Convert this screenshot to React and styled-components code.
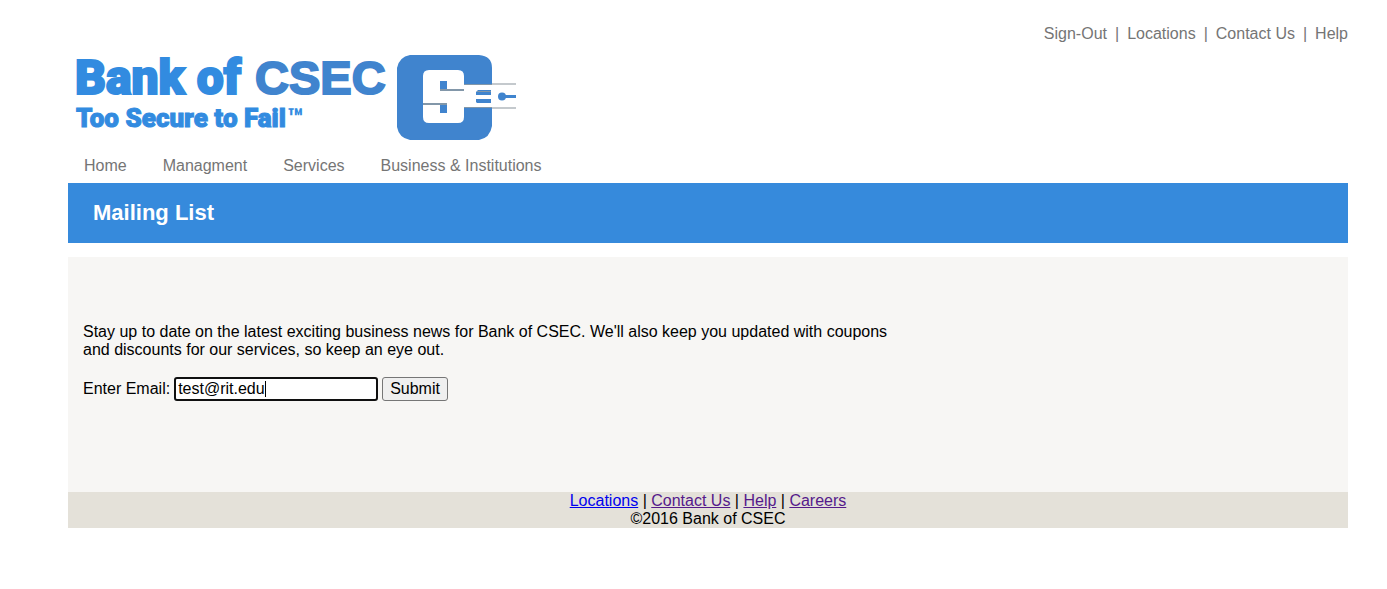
import React from "react";
import styled, { createGlobalStyle } from "styled-components";

const GlobalStyle = createGlobalStyle`
  body {
    margin: 0;
    background: #fff;
    color: #000;
    font: 16px/18px "Liberation Sans", Arial, sans-serif;
  }
`;

const Page = styled.div`
  padding: 25px 39px 0 68px;
`;

const UtilityNav = styled.nav`
  display: flex;
  justify-content: flex-end;
  gap: 8px;
  color: #757575;
`;

const PlainLink = styled.a`
  color: #757575;
  text-decoration: none;
`;

const LogoLink = styled.a`
  display: block;
  width: 450px;
  margin-top: 7px;
`;

const LogoArt = styled.svg`
  display: block;
`;

const MainNav = styled.nav`
  display: flex;
  gap: 36px;
  padding: 8px 16px;
`;

const Banner = styled.header`
  padding: 17px 25px;
  background: #368adc;
`;

const Title = styled.h1`
  margin: 0;
  color: #fff;
  font-size: 22px;
  line-height: 26px;
`;

const Panel = styled.main`
  margin-top: 14px;
  padding: 66px 15px 91px;
  background: #f7f6f4;
`;

const Intro = styled.p`
  max-width: 810px;
  margin: 0 0 18px;
`;

const SignupForm = styled.form`
  display: flex;
  align-items: center;
  gap: 4px;
`;

const EmailField = styled.div`
  position: relative;
  display: flex;
`;

const EmailInput = styled.input`
  box-sizing: border-box;
  width: 204px;
  height: 24px;
  padding: 0 2px;
  border: 2px solid #101010;
  border-radius: 3px;
  outline: none;
  background: #fff;
  color: #000;
  caret-color: transparent;
  font: inherit;
`;

const Caret = styled.span`
  position: absolute;
  top: 4px;
  left: 91px;
  width: 1px;
  height: 16px;
  background: #000;
`;

const SubmitButton = styled.button`
  box-sizing: border-box;
  height: 24px;
  padding: 0 7px;
  border: 1px solid #767676;
  border-radius: 3px;
  background: #efefef;
  color: #000;
  font: inherit;
`;

const Footer = styled.footer`
  background: #e4e1d9;
  text-align: center;
`;

const FooterLink = styled.a`
  color: ${({ $visited }) => ($visited ? "#551a8b" : "#0000ee")};
`;

const utilityLinks = ["Sign-Out", "Locations", "Contact Us", "Help"];
const sections = ["Home", "Managment", "Services", "Business & Institutions"];
const footerLinks = [
  { label: "Locations", visited: false },
  { label: "Contact Us", visited: true },
  { label: "Help", visited: true },
  { label: "Careers", visited: true },
];

function Logo() {
  return (
    <LogoArt width="450" height="99" viewBox="0 0 450 99" role="img" aria-label="Bank of CSEC">
      <g fill="#328be0" stroke="#328be0" fontFamily="Roboto, sans-serif" fontWeight="900">
        <text x="7" y="44" fontSize="48" strokeWidth="2">Bank of</text>
        <text x="8" y="77" fontSize="26" strokeWidth="1">Too Secure to Fail</text>
        <text x="219" y="77" fontSize="26" strokeWidth="0">™</text>
      </g>
      <text
        x="187" y="44" fontSize="47" fontWeight="700" strokeWidth="2"
        fontFamily="Liberation Sans, Arial, sans-serif" fill="#4084ce" stroke="#4084ce"
      >CSEC</text>
      <path fill="#4084ce" d="M342 5H411Q424 6 424 18V34H396V26Q396 20 390 20H361Q355 20 355 26V67Q355 73 361 73H390Q396 73 396 67V58H424V76Q422 88 411 90H342Q331 88 329 77V18Q331 7 342 5Z" />
      <path fill="#4084ce" d="M372 31H379V39H372ZM372 54H379V63H372Z" />
      <path fill="#8297a9" d="M372 39H396V41H372ZM355 53H379V55H355Z" />
      <path stroke="#8297a9" strokeWidth="1" d="M396 34.500H424M396 57.500H424" />
      <path stroke="#c4c9cd" strokeWidth="2" d="M424 34H448M424 58H448" />
      <path fill="#4084ce" d="M410 40H423V45H408V42ZM408 49H423V53H409L408 52Z" />
      <path stroke="#8297a9" d="M409 41.500H423" />
      <circle cx="434" cy="46.500" r="4" fill="#4084ce" />
      <path stroke="#4084ce" strokeWidth="3" d="M434 46.500H448" />
    </LogoArt>
  );
}

export default function App() {
  return (
    <>
      <GlobalStyle />
      <Page>
        <UtilityNav aria-label="Account">
          {utilityLinks.map((label, i) => (
            <React.Fragment key={label}>
              {i > 0 && <span>|</span>}
              <PlainLink href="#">{label}</PlainLink>
            </React.Fragment>
          ))}
        </UtilityNav>
        <LogoLink href="#">
          <Logo />
        </LogoLink>
        <MainNav aria-label="Main">
          {sections.map((label) => (
            <PlainLink key={label} href="#">{label}</PlainLink>
          ))}
        </MainNav>
        <Banner>
          <Title>Mailing List</Title>
        </Banner>
        <Panel>
          <Intro>
            Stay up to date on the latest exciting business news for Bank of CSEC. We'll also keep
            you updated with coupons and discounts for our services, so keep an eye out.
          </Intro>
          <SignupForm onSubmit={(e) => e.preventDefault()}>
            <label htmlFor="email">Enter Email:</label>
            <EmailField>
              <EmailInput id="email" type="text" defaultValue="test@rit.edu" />
              <Caret aria-hidden="true" />
            </EmailField>
            <SubmitButton type="submit">Submit</SubmitButton>
          </SignupForm>
        </Panel>
        <Footer>
          <div>
            {footerLinks.map(({ label, visited }, i) => (
              <React.Fragment key={label}>
                {i > 0 && " | "}
                <FooterLink href="#" $visited={visited}>{label}</FooterLink>
              </React.Fragment>
            ))}
          </div>
          <div>©2016 Bank of CSEC</div>
        </Footer>
      </Page>
    </>
  );
}
